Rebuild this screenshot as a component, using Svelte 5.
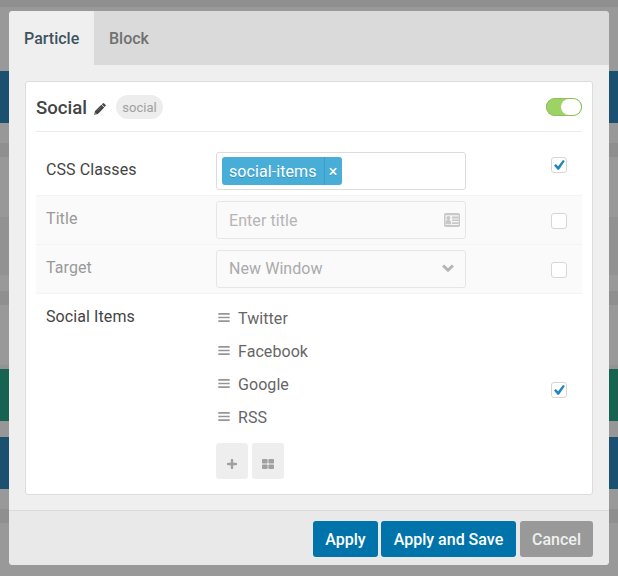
<script>
  const items = ['Twitter', 'Facebook', 'Google', 'RSS'];
  const stripes = [
    [7, '#8f8f8f'], [64, '#999999'], [52, '#1b5070'], [20, '#989898'], [14, '#8f8f8f'],
    [60, '#989898'], [58, '#929292'], [16, '#999999'], [14, '#8f8f8f'], [60, '#999999'],
    [4, '#939393'], [52, '#156350'], [16, '#979797'], [52, '#1b5070'], [20, '#999999'],
    [14, '#8f8f8f'], [53, '#999999']
  ];
</script>

{#snippet check(on)}
  <span class="check" role="checkbox" aria-checked={on} tabindex="0">
    {#if on}
      <svg width="16" height="16" viewBox="0 0 16 16"><path d="M3 8.500 4.800 6.900 7.100 9.200 12 2.900 13.900 4.100 8 12.700H6.500Z" fill="#2385bd" /></svg>
    {/if}
  </span>
{/snippet}

<div class="page">
  <div class="backdrop">
    {#each stripes as [h, c]}
      <div style="height:{h}px;background:{c}"></div>
    {/each}
  </div>

  <div class="modal">
    <nav class="tabs">
      <span class="tab active">Particle</span>
      <span class="tab">Block</span>
    </nav>

    <main class="content">
      <section class="card">
        <header class="head">
          <h4>Social</h4>
          <svg class="pencil" width="12" height="12" viewBox="0 0 12 12">
            <path d="M7.800 1.300 8.700.4Q9.400-.2 10.100.4L11.500 1.800Q12 2.400 11.500 3.100L10.600 4ZM7.300 1.800 10.200 4.600 3.900 11 .2 11.800 1 8.100Z" fill="#444" />
            <path d="M3.200 7.700 7.200 3.700" stroke="#888" stroke-width=".6" />
            <path d="M1.700 9.500 1.400 10.700 2.600 10.400Z" fill="#eee" />
          </svg>
          <span class="badge">social</span>
          <span class="toggle"><i></i></span>
        </header>

        <div class="row first">
          <span class="label">CSS Classes</span>
          <div class="field">
            <span class="tag"><span class="tagname">social-items</span><span class="remove">×</span></span>
          </div>
          {@render check(true)}
        </div>

        <div class="row off">
          <span class="label">Title</span>
          <div class="field text">
            <span>Enter title</span>
            <svg class="vcard" width="16" height="14" viewBox="0 0 16 14">
              <rect width="16" height="14" rx="1.800" fill="#c8c8c8" />
              <rect x="1.500" y="2.200" width="13.200" height="9.800" fill="#f5f5f5" />
              <circle cx="4.300" cy="4.900" r="2" fill="#c8c8c8" />
              <path d="M1.500 11.200Q1.500 7.500 3 7H5.600Q7.100 7.500 7.100 11.200ZM8 3.400h6.800v2H8ZM8 6.400h6.800v1.700H8ZM8 9.200h6.800v1.800H8Z" fill="#c8c8c8" />
            </svg>
          </div>
          {@render check(false)}
        </div>

        <div class="row off">
          <span class="label">Target</span>
          <div class="field text select">
            <span>New Window</span>
            <svg width="12" height="9" viewBox="0 0 12 9"><path d="M1.100 1.500 6 6.300 10.900 1.500" fill="none" stroke="#b5b5b5" stroke-width="2.900" /></svg>
          </div>
          {@render check(false)}
        </div>

        <div class="row social">
          <span class="label">Social Items</span>
          <div class="list">
            {#each items as item}
              <div class="item">
                <svg width="12" height="9" viewBox="0 0 12 9"><path d="M.3.900H11.700M.3 4.500H11.700M.3 8.100H11.700" stroke="#969696" stroke-width="1.700" /></svg>
                <span>{item}</span>
              </div>
            {/each}
            <div class="tools">
              <span class="tool"><svg width="10" height="10" viewBox="0 0 10 10"><path d="M5 1V9M1 5H9" stroke="#a0a0a0" stroke-width="2.400" stroke-linecap="round" /></svg></span>
              <span class="tool"><svg width="12" height="10" viewBox="0 0 12 10" fill="#a0a0a0"><rect width="5.600" height="4.600" rx="1" /><rect x="6.400" width="5.600" height="4.600" rx="1" /><rect y="5.400" width="5.600" height="4.600" rx="1" /><rect x="6.400" y="5.400" width="5.600" height="4.600" rx="1" /></svg></span>
            </div>
          </div>
          {@render check(true)}
        </div>
      </section>
    </main>

    <footer>
      <button class="apply">Apply</button>
      <button class="save">Apply and Save</button>
      <button class="cancel">Cancel</button>
    </footer>
  </div>
</div>

<style>
  .page {
    position: relative;
    box-sizing: border-box;
    height: 576px;
    padding: 11px 9px;
    overflow: hidden;
    font: 400 16px/24px Roboto, "Liberation Sans", sans-serif;
    color: #444;
  }
  .page :global(*) { box-sizing: border-box; }
  svg { display: block; flex: none; }
  .backdrop { position: absolute; inset: 0; }
  .modal {
    position: relative;
    display: flex;
    flex-direction: column;
    height: 554px;
    border-radius: 4px;
    background: #efefef;
    overflow: hidden;
  }
  .tabs { display: flex; height: 54px; background: #dadada; flex: none; }
  .tab { padding: 16px 15px 0; color: #707070; font-weight: 500; }
  .tab.active { width: 85px; background: #efefef; color: #3d5360; }
  .content { flex: 1; padding: 16px 16px 15px; min-height: 0; }
  .card {
    height: 414px;
    padding: 0 10px;
    border: 1px solid #dcdcdc;
    border-radius: 3px;
    background: #fff;
  }
  .head {
    display: flex;
    align-items: center;
    height: 50px;
    border-bottom: 1px solid #eaeaea;
  }
  h4 { margin: 2px 0 0; font-size: 18.600px; font-weight: 500; width: 58px; white-space: nowrap; }
  .pencil { margin-top: 4px; }
  .badge {
    width: 47px;
    height: 24px;
    margin: 1px 0 0 10px;
    border-radius: 12px;
    background: #ededed;
    color: #a0a0a0;
    font-size: 13px;
    line-height: 25px;
    text-align: center;
  }
  .toggle {
    display: flex;
    justify-content: flex-end;
    width: 36px;
    height: 18px;
    margin: 1px 0 0 auto;
    padding: 1px;
    border-radius: 9px;
    background: #9dd365;
    box-shadow: inset 0 0 0 1px #8fbf5d;
  }
  .toggle i { width: 20px; height: 16px; border-radius: 8px; background: #fff; }
  .row {
    display: flex;
    height: 49px;
    padding: 5px 15px 0 10px;
    border-top: 1px solid #f3f3f3;
  }
  .row.first { height: 63px; padding-top: 19px; border-top: 1px solid transparent; }
  .row.off { background: #fafafa; color: #999; }
  .label { width: 170px; flex: none; padding-top: 6px; letter-spacing: .09px; }
  .field {
    width: 250px;
    height: 38px;
    border: 1px solid #dcdcdc;
    border-radius: 3px;
    background: #fff;
    padding: 4px 5px;
  }
  .tag {
    display: flex;
    width: 120px;
    height: 28px;
    border-radius: 3px;
    background: #48aed8;
    color: #fff;
    line-height: 29px;
    letter-spacing: .08px;
    text-shadow: 0 1px 0 rgba(0, 51, 83, .25);
  }
  .tagname { width: 103px; padding-left: 7px; border-right: 1px solid #3b9fc9; }
  .remove { width: 16px; text-align: center; font-weight: 500; }
  .field.text {
    display: flex;
    align-items: center;
    justify-content: space-between;
    padding: 0 5px 0 12px;
    border-color: #e6e6e6;
    background: #fafafa;
    color: #b5b5b5;
    letter-spacing: .06px;
  }
  .field.text span { margin-top: 2px; }
  .field.select { padding-right: 11px; color: #aaa; }
  .field.select span { margin-top: 0; }
  .field.select svg { margin-top: -1px; }
  .check {
    width: 16px;
    height: 16px;
    margin: 6px 0 0 auto;
    border: 1px solid #d6d6d6;
    border-radius: 3px;
    background: #fff;
  }
  .check svg { margin: -1px; }
  .row.first .check { margin-top: 5px; }
  .row.off .check { margin-top: 12px; }
  .row.social { height: 200px; }
  .row.social .check { margin-top: 83px; }
  .list { width: 250px; padding-top: 2px; color: #666; letter-spacing: .07px; }
  .item { display: flex; align-items: center; gap: 8px; height: 33px; padding: 0 2px; }
  .item span { margin-top: 2px; }
  .tools { display: flex; gap: 4px; margin-top: 10px; }
  .tool {
    display: flex;
    align-items: center;
    justify-content: center;
    width: 32px;
    height: 36px;
    padding-top: 6px;
    border-radius: 3px;
    background: #eee;
  }
  footer {
    display: flex;
    height: 55px;
    flex: none;
    padding: 10px 16px;
    border-top: 1px solid #dadada;
    background: #e9e9e9;
    justify-content: flex-end;
  }
  button {
    height: 36px;
    padding: 0;
    border: 0;
    border-radius: 3px;
    color: #fff;
    background: #0073aa;
    font: 500 16px/38px Roboto, "Liberation Sans", sans-serif;
    white-space: nowrap;
  }
  .apply { width: 65px; margin-right: 3px; }
  .save { width: 135px; margin-right: 4px; }
  .cancel { width: 73px; background: #999; color: #f0f0f0; }
</style>
